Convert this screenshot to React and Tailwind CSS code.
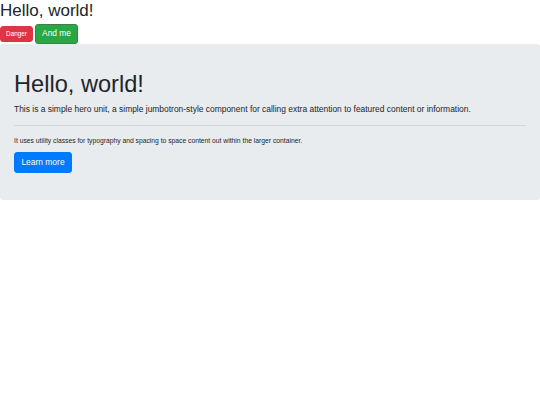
export default function App() {
  return (
    <div className="font-['Liberation_Sans',Arial,sans-serif] text-[#212529] bg-white min-h-screen">
      <h1 className="text-[17px] leading-[21px] mb-[2px] font-normal">Hello, world!</h1>

      {/* Buttons */}
      <div className="flex items-center gap-[2px] h-[21px]">
        <button className="h-[16px] w-[33px] flex items-center justify-center bg-[#dc3545] text-white text-[6.4px] rounded-[3px] border border-[#dc3545]">
          Danger
        </button>
        <button className="h-[20px] w-[43px] flex items-center justify-center bg-[#28a745] text-white text-[8.4px] rounded-[3px] border border-[#3f7d4d]">
          And me
        </button>
      </div>

      {/* Jumbotron */}
      <div className="bg-[#e9ecef] rounded-[3px] px-[14px] pt-[26px] pb-[26.5px]">
        <h1 className="text-[23.6px] leading-[29px] font-light">Hello, world!</h1>
        <p className="text-[8.45px] leading-[13px] mt-[3.5px]">
          This is a simple hero unit, a simple jumbotron-style component for calling extra attention to featured content or information.
        </p>
        <hr className="mt-[9.5px] mb-[9.5px] border-0 border-t border-[#d3d5d8]" />
        <p className="text-[6.75px] leading-[10.5px]">
          It uses utility classes for typography and spacing to space content out within the larger container.
        </p>
        <button className="mt-[6px] h-[21px] w-[58px] flex items-center justify-center bg-[#007bff] text-white text-[8.45px] rounded-[3px] border border-[#007bff]">
          Learn more
        </button>
      </div>
    </div>
  );
}
